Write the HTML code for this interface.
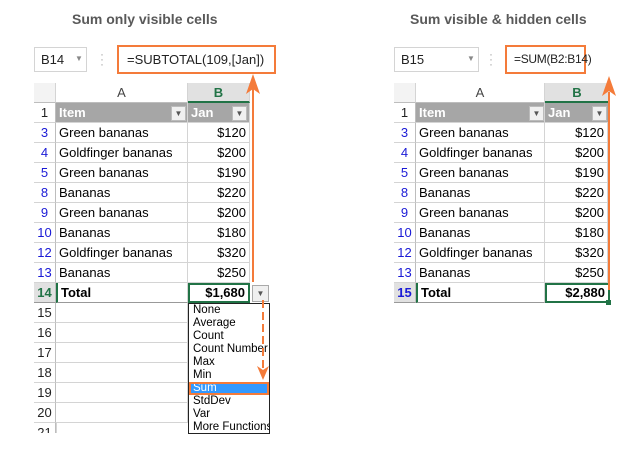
<!DOCTYPE html>
<html><head><style>
body{margin:0;width:625px;height:453px;background:#fff;position:relative;overflow:hidden;font-family:"Liberation Sans",Arial,sans-serif;}
div{position:absolute;box-sizing:border-box;}
.t{font-size:14px;font-weight:bold;color:#595959;}
.nb{border:1px solid #d4d4d4;font-size:13px;color:#222;padding:4px 6px;white-space:nowrap;}
.nb span{position:absolute;top:6px;color:#888;font-size:8px;}
.fx{border:2px solid #f47b3a;font-size:13px;color:#222;padding:5px 8px;background:#fff;white-space:nowrap;}
.rh{font-size:13px;color:#222;text-align:center;border-bottom:1px solid #d4d4d4;border-right:1px solid #bdbdbd;height:20px;line-height:20px;}
.blue{color:#1a1ad6;}
.c{font-size:13px;color:#000;height:20px;line-height:20px;border-bottom:1px solid #d4d4d4;border-right:1px solid #d4d4d4;padding:0 3px;white-space:nowrap;overflow:hidden;}
.r{text-align:right;}
.h{background:#a6a6a6;color:#fff;font-weight:bold;}
.ch{height:20px;line-height:20px;text-align:center;font-size:13px;color:#444;border-right:1px solid #d4d4d4;border-bottom:1px solid #bdbdbd;}
.fb{width:15px;height:15px;background:#f0f0f0;border:1px solid #bbb;color:#555;font-size:8px;text-align:center;line-height:14px;}
.dd div{position:static;font-size:11.5px;height:13px;line-height:13px;padding-left:4px;color:#000;white-space:nowrap;}
</style></head><body>
<div class="t" style="left:72px;top:11px">Sum only visible cells</div>
<div class="t" style="left:410px;top:11px">Sum visible &amp; hidden cells</div>

<!-- left -->
<div class="nb" style="left:34px;top:47px;width:53px;height:25px">B14<span style="left:40px">▼</span></div>
<div style="left:100px;top:52px;color:#aaa;font-size:12px;line-height:5px">·<br>·<br>·</div>
<div class="fx" style="left:117px;top:45px;width:159px;height:29px">=SUBTOTAL(109,[Jan])</div>
<div class="ch" style="left:34px;top:83px;width:22px;background:#f3f3f3"></div>
<div class="ch" style="left:56px;top:83px;width:132px">A</div>
<div class="ch" style="left:188px;top:83px;width:62px;background:#e1e1e1;color:#217346;font-weight:bold;border-bottom:2px solid #217346">B</div>

<div class="rh" style="left:34px;top:103px;width:22px">1</div>
<div class="c h" style="left:56px;top:103px;width:132px">Item</div><div class="fb" style="left:171px;top:106px">▼</div>
<div class="c h" style="left:188px;top:103px;width:62px">Jan</div><div class="fb" style="left:232px;top:106px">▼</div>

<div class="rh blue" style="left:34px;top:123px;width:22px">3</div><div class="c" style="left:56px;top:123px;width:132px">Green bananas</div><div class="c r" style="left:188px;top:123px;width:62px">$120</div>
<div class="rh blue" style="left:34px;top:143px;width:22px">4</div><div class="c" style="left:56px;top:143px;width:132px">Goldfinger bananas</div><div class="c r" style="left:188px;top:143px;width:62px">$200</div>
<div class="rh blue" style="left:34px;top:163px;width:22px">5</div><div class="c" style="left:56px;top:163px;width:132px">Green bananas</div><div class="c r" style="left:188px;top:163px;width:62px">$190</div>
<div class="rh blue" style="left:34px;top:183px;width:22px">8</div><div class="c" style="left:56px;top:183px;width:132px">Bananas</div><div class="c r" style="left:188px;top:183px;width:62px">$220</div>
<div class="rh blue" style="left:34px;top:203px;width:22px">9</div><div class="c" style="left:56px;top:203px;width:132px">Green bananas</div><div class="c r" style="left:188px;top:203px;width:62px">$200</div>
<div class="rh blue" style="left:34px;top:223px;width:22px">10</div><div class="c" style="left:56px;top:223px;width:132px">Bananas</div><div class="c r" style="left:188px;top:223px;width:62px">$180</div>
<div class="rh blue" style="left:34px;top:243px;width:22px">12</div><div class="c" style="left:56px;top:243px;width:132px">Goldfinger bananas</div><div class="c r" style="left:188px;top:243px;width:62px">$320</div>
<div class="rh blue" style="left:34px;top:263px;width:22px">13</div><div class="c" style="left:56px;top:263px;width:132px">Bananas</div><div class="c r" style="left:188px;top:263px;width:62px">$250</div>
<div class="rh" style="left:34px;top:283px;width:22px;background:#e1e1e1;color:#217346;font-weight:bold;border-bottom:1px solid #999">14</div>
<div class="c" style="left:56px;top:283px;width:132px;font-weight:bold;border-bottom:1px solid #999;border-left:2px solid #217346">Total</div>
<div class="c r" style="left:188px;top:283px;width:62px;font-weight:bold;border:2px solid #217346;line-height:16px">$1,680</div>
<div style="left:252px;top:285px;width:17px;height:17px;border:1px solid #aaa;background:#f0f0f0;color:#555;font-size:8px;text-align:center;line-height:16px">▼</div>
<div class="rh" style="left:34px;top:303px;width:22px">15</div><div class="c" style="left:56px;top:303px;width:132px"></div>
<div class="rh" style="left:34px;top:323px;width:22px">16</div><div class="c" style="left:56px;top:323px;width:132px"></div>
<div class="rh" style="left:34px;top:343px;width:22px">17</div><div class="c" style="left:56px;top:343px;width:132px"></div>
<div class="rh" style="left:34px;top:363px;width:22px">18</div><div class="c" style="left:56px;top:363px;width:132px"></div>
<div class="rh" style="left:34px;top:383px;width:22px">19</div><div class="c" style="left:56px;top:383px;width:132px"></div>
<div class="rh" style="left:34px;top:403px;width:22px">20</div><div class="c" style="left:56px;top:403px;width:132px"></div>
<div class="rh" style="left:34px;top:423px;width:22px;height:10px;line-height:20px;overflow:hidden;border-bottom:none">21</div>
<div style="left:56px;top:423px;width:1px;height:10px;background:#d4d4d4"></div>

<div class="dd" style="left:188px;top:303px;width:82px;height:131px;border:1px solid #222;background:#fff;overflow:hidden">
<div>None</div><div>Average</div><div>Count</div><div>Count Number</div><div>Max</div><div>Min</div>
<div style="background:#3399ff;color:#fff;outline:2px solid #f47b3a;outline-offset:-2px">Sum</div>
<div>StdDev</div><div>Var</div><div>More Functions</div></div>

<!-- right -->
<div class="nb" style="left:394px;top:47px;width:85px;height:25px">B15<span style="left:72px">▼</span></div>
<div style="left:489px;top:52px;color:#aaa;font-size:12px;line-height:5px">·<br>·<br>·</div>
<div class="fx" style="left:505px;top:45px;width:81px;height:29px;padding:5px 6px 0 7px;font-size:12px;letter-spacing:-0.3px">=SUM(B2:B14)</div>
<div class="ch" style="left:394px;top:83px;width:22px;background:#f3f3f3"></div>
<div class="ch" style="left:416px;top:83px;width:129px">A</div>
<div class="ch" style="left:545px;top:83px;width:65px;background:#e1e1e1;color:#217346;font-weight:bold;border-bottom:2px solid #217346">B</div>

<div class="rh" style="left:394px;top:103px;width:22px">1</div>
<div class="c h" style="left:416px;top:103px;width:129px">Item</div><div class="fb" style="left:529px;top:106px">▼</div>
<div class="c h" style="left:545px;top:103px;width:65px">Jan</div><div class="fb" style="left:592px;top:106px">▼</div>

<div class="rh blue" style="left:394px;top:123px;width:22px">3</div><div class="c" style="left:416px;top:123px;width:129px">Green bananas</div><div class="c r" style="left:545px;top:123px;width:63px">$120</div>
<div class="rh blue" style="left:394px;top:143px;width:22px">4</div><div class="c" style="left:416px;top:143px;width:129px">Goldfinger bananas</div><div class="c r" style="left:545px;top:143px;width:63px">$200</div>
<div class="rh blue" style="left:394px;top:163px;width:22px">5</div><div class="c" style="left:416px;top:163px;width:129px">Green bananas</div><div class="c r" style="left:545px;top:163px;width:63px">$190</div>
<div class="rh blue" style="left:394px;top:183px;width:22px">8</div><div class="c" style="left:416px;top:183px;width:129px">Bananas</div><div class="c r" style="left:545px;top:183px;width:63px">$220</div>
<div class="rh blue" style="left:394px;top:203px;width:22px">9</div><div class="c" style="left:416px;top:203px;width:129px">Green bananas</div><div class="c r" style="left:545px;top:203px;width:63px">$200</div>
<div class="rh blue" style="left:394px;top:223px;width:22px">10</div><div class="c" style="left:416px;top:223px;width:129px">Bananas</div><div class="c r" style="left:545px;top:223px;width:63px">$180</div>
<div class="rh blue" style="left:394px;top:243px;width:22px">12</div><div class="c" style="left:416px;top:243px;width:129px">Goldfinger bananas</div><div class="c r" style="left:545px;top:243px;width:63px">$320</div>
<div class="rh blue" style="left:394px;top:263px;width:22px">13</div><div class="c" style="left:416px;top:263px;width:129px">Bananas</div><div class="c r" style="left:545px;top:263px;width:63px">$250</div>
<div class="rh blue" style="left:394px;top:283px;width:22px;background:#e1e1e1;font-weight:bold;border-bottom:1px solid #999">15</div>
<div class="c" style="left:416px;top:283px;width:129px;font-weight:bold;border-bottom:1px solid #999;border-left:2px solid #217346">Total</div>
<div class="c r" style="left:545px;top:283px;width:65px;font-weight:bold;border:2px solid #217346;line-height:16px">$2,880</div>
<div style="left:606px;top:300px;width:5px;height:5px;background:#217346"></div>

<svg style="position:absolute;left:0;top:0" width="625" height="453">
<line x1="253" y1="282" x2="253" y2="88" stroke="#f47b3a" stroke-width="2"/>
<polygon points="246,94 253,74 260,94 253,89" fill="#f47b3a"/>
<line x1="263" y1="300" x2="263" y2="370" stroke="#f47b3a" stroke-width="2" stroke-dasharray="8,4"/>
<polygon points="257,366 263,380 269,366 263,370" fill="#f47b3a"/>
<line x1="609" y1="290" x2="609" y2="92" stroke="#f47b3a" stroke-width="2"/>
<polygon points="602,96 609,76 616,96 609,91" fill="#f47b3a"/>
</svg>
</body></html>
